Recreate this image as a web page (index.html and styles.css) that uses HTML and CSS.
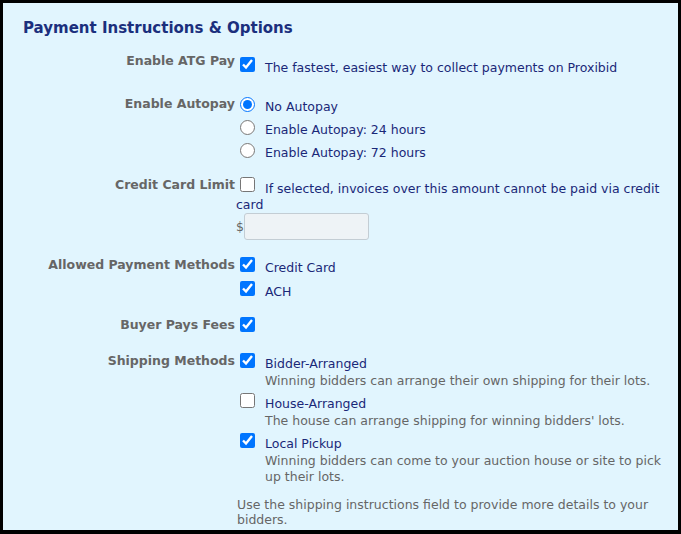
FILE: index.html
```html
<!DOCTYPE html>
<html lang="en">
<head>
  <meta charset="UTF-8" />
  <meta name="viewport" content="width=device-width, initial-scale=1" />
  <title>Payment Instructions &amp; Options</title>
  <link rel="stylesheet" href="styles.css">
</head>
<body>
  <div class="panel">
    <h2>Payment Instructions &amp; Options</h2>

    <div class="field field-atg">
      <div class="label">Enable ATG Pay</div>
      <div class="control">
        <label class="opt"><input type="checkbox" checked><span class="opt-text"><span class="opt-title">The fastest, easiest way to collect payments on Proxibid</span></span></label>
      </div>
    </div>

    <div class="field">
      <div class="label">Enable Autopay</div>
      <div class="control">
        <label class="opt opt-radio"><input type="radio" name="autopay" checked><span class="opt-text"><span class="opt-title">No Autopay</span></span></label>
        <label class="opt opt-radio"><input type="radio" name="autopay"><span class="opt-text"><span class="opt-title">Enable Autopay: 24 hours</span></span></label>
        <label class="opt opt-radio"><input type="radio" name="autopay"><span class="opt-text"><span class="opt-title">Enable Autopay: 72 hours</span></span></label>
      </div>
    </div>

    <div class="field field-limit">
      <div class="label">Credit Card Limit</div>
      <div class="control">
        <div class="wrap-opt"><input type="checkbox">If selected, invoices over this amount cannot be paid via credit card</div>
        <div class="amount"><span>$</span><input type="text" class="amount-input"></div>
      </div>
    </div>

    <div class="field">
      <div class="label">Allowed Payment Methods</div>
      <div class="control">
        <label class="opt"><input type="checkbox" checked><span class="opt-text"><span class="opt-title">Credit Card</span></span></label>
        <label class="opt"><input type="checkbox" checked><span class="opt-text"><span class="opt-title">ACH</span></span></label>
      </div>
    </div>

    <div class="field">
      <div class="label">Buyer Pays Fees</div>
      <div class="control">
        <label class="opt"><input type="checkbox" checked></label>
      </div>
    </div>

    <div class="field">
      <div class="label">Shipping Methods</div>
      <div class="control">
        <label class="opt opt-long"><input type="checkbox" checked><span class="opt-text"><span class="opt-title">Bidder-Arranged</span><span class="opt-desc">Winning bidders can arrange their own shipping for their lots.</span></span></label>
        <label class="opt opt-long"><input type="checkbox"><span class="opt-text"><span class="opt-title">House-Arranged</span><span class="opt-desc">The house can arrange shipping for winning bidders' lots.</span></span></label>
        <label class="opt opt-long"><input type="checkbox" checked><span class="opt-text"><span class="opt-title">Local Pickup</span><span class="opt-desc">Winning bidders can come to your auction house or site to pick up their lots.</span></span></label>
        <p class="note">Use the shipping instructions field to provide more details to your bidders.</p>
      </div>
    </div>
  </div>
</body>
</html>
```

FILE: styles.css
```css
html, body {
  margin: 0;
  height: 100%;
  overflow: hidden;
}
body {
  font-family: "DejaVu Sans", Verdana, sans-serif;
  font-size: 12.5px;
  color: #666;
}

.panel {
  box-sizing: border-box;
  height: 534px;
  border: 3px solid #000;
  border-bottom-width: 4px;
  background: #e1f5fe;
  padding: 15px 12px 0 20px;
}
.panel h2 {
  margin: 0 0 15px;
  font-size: 15px;
  line-height: 20px;
  color: #1b2f7d;
}

.field {
  display: grid;
  grid-template-columns: 212px 1fr;
  column-gap: 1px;
  margin-bottom: 12px;
  line-height: 16px;
}
.field .label {
  text-align: right;
  font-weight: bold;
  color: #666;
}
.field-atg .control {
  padding-top: 4px;
}
.field-atg {
  margin-bottom: 15px;
}

.opt {
  display: flex;
  align-items: flex-start;
  min-height: 24px;
}
.opt input {
  width: 15px;
  height: 15px;
  margin: 0 0 0 4px;
  flex: none;
}
.opt-radio {
  min-height: 23px;
}
.opt-radio input {
  margin-top: 1px;
}
.opt-text {
  display: flex;
  flex-direction: column;
  margin-left: 10px;
  padding-top: 3px;
}
.opt-title {
  color: #1a2878;
}
.opt-desc {
  margin-top: 1px;
  color: #666;
}
.opt-long {
  min-height: 40px;
}

.wrap-opt {
  padding-top: 4px;
  color: #1a2878;
}
.wrap-opt input {
  float: left;
  width: 15px;
  height: 15px;
  margin: -4px 10px 0 4px;
}
.amount {
  display: flex;
  align-items: center;
  margin-bottom: 5px;
  color: #666;
}
.amount-input {
  box-sizing: border-box;
  width: 125px;
  height: 27px;
  border: 1px solid #c3cdd4;
  border-radius: 3px;
  background: #eef3f6;
}

.note {
  margin: 12px 0 0 1px;
  line-height: 15px;
}
```
